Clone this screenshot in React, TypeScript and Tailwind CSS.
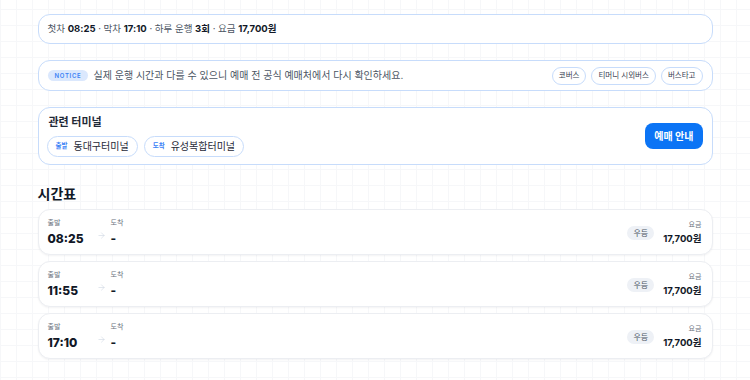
import { ArrowRight } from 'lucide-react';

const font = { fontFamily: 'Inter, "Noto Sans CJK KR", sans-serif' };

const schedules = [
  { time: '08:25', grade: '우등', fare: '17,700원' },
  { time: '11:55', grade: '우등', fare: '17,700원' },
  { time: '17:10', grade: '우등', fare: '17,700원' },
];

const vendors = ['코버스', '티머니 시외버스', '버스타고'];

function ScheduleRow({ time, grade, fare }: { time: string; grade: string; fare: string }) {
  return (
    <div className="flex h-[46px] items-center rounded-xl border border-[#eceef2] bg-white pl-[9px] pr-[10px] shadow-[0_1px_2px_rgba(15,23,42,0.05)]">
      <div className="flex w-[49px] flex-col">
        <span className="text-[7px] leading-[9px] text-[#6b7280]">출발</span>
        <span className="mt-[4px] text-[12px] font-extrabold leading-[15px] text-[#111827]">{time}</span>
      </div>
      <ArrowRight className="mt-[6px] size-[9px] text-[#cbd5e1]" strokeWidth={1.5} />
      <div className="ml-[5px] flex flex-col">
        <span className="text-[7px] leading-[9px] text-[#6b7280]">도착</span>
        <span className="mt-[4px] text-[12px] font-extrabold leading-[15px] text-[#111827]">-</span>
      </div>
      <div className="flex-1" />
      <span className="mr-[9px] mt-[2px] rounded-full bg-[#eef1f6] px-[6px] py-[2px] text-[8px] leading-[10px] text-[#4b5563]">
        {grade}
      </span>
      <div className="flex flex-col items-end">
        <span className="text-[7px] leading-[9px] text-[#6b7280]">요금</span>
        <span className="mt-[4px] text-[9.5px] font-bold leading-[12px] text-[#111827]">{fare}</span>
      </div>
    </div>
  );
}

export default function App() {
  return (
    <div
      className="min-h-[380px] w-full bg-white bg-[linear-gradient(to_right,#f6f7f9_1px,transparent_1px),linear-gradient(to_bottom,#f6f7f9_1px,transparent_1px)] bg-[size:16px_16px] bg-[position:0px_9px]"
      style={font}
    >
      <div className="mx-auto flex w-[675px] flex-col pt-[14px]">
        <div className="flex h-[30px] items-center rounded-xl border border-[#c7dcfb] bg-white px-[9px] text-[9.5px] text-[#4b5563]">
          <span>
            첫차 <b className="text-[#111827]">08:25</b> · 막차 <b className="text-[#111827]">17:10</b> · 하루 운행{' '}
            <b className="text-[#111827]">3회</b> · 요금 <b className="text-[#111827]">17,700원</b>
          </span>
        </div>

        <div className="mt-[16px] flex h-[31px] items-center rounded-xl border border-[#c7dcfb] bg-white pl-[9px] pr-[9px]">
          <span className="rounded-full bg-[#dbe8fd] px-[7px] py-[1px] text-[6px] font-semibold leading-[9px] tracking-[0.12em] text-[#3b82f6]">
            NOTICE
          </span>
          <span className="ml-[5px] text-[10px] text-[#4b5563]">
            실제 운행 시간과 다를 수 있으니 예매 전 공식 예매처에서 다시 확인하세요.
          </span>
          <div className="flex-1" />
          <div className="flex gap-[5px]">
            {vendors.map((v) => (
              <span
                key={v}
                className="rounded-full border border-[#c7dcfb] bg-white px-[6px] py-[2px] text-[7.5px] leading-[12px] text-[#374151]"
              >
                {v}
              </span>
            ))}
          </div>
        </div>

        <div className="mt-[16px] flex h-[58px] items-center rounded-xl border border-[#c7dcfb] bg-white pl-[8px] pr-[9px]">
          <div className="flex flex-col">
            <span className="ml-[2px] text-[11px] font-bold leading-[14px] text-[#1f2937]">관련 터미널</span>
            <div className="mt-[7px] flex gap-[6px]">
              <span className="flex h-[21px] items-center gap-[6px] rounded-full border border-[#c7dcfb] px-[8px]">
                <span className="text-[6.5px] font-semibold text-[#3b82f6]">출발</span>
                <span className="text-[10px] text-[#1f2937]">동대구터미널</span>
              </span>
              <span className="flex h-[21px] items-center gap-[6px] rounded-full border border-[#c7dcfb] px-[8px]">
                <span className="text-[6.5px] font-semibold text-[#3b82f6]">도착</span>
                <span className="text-[10px] text-[#1f2937]">유성복합터미널</span>
              </span>
            </div>
          </div>
          <div className="flex-1" />
          <button
            type="button"
            className="h-[26px] rounded-lg bg-[#0b74f5] px-[9px] text-[10px] font-bold text-white"
          >
            예매 안내
          </button>
        </div>

        <h2 className="mt-[20px] text-[14px] font-bold leading-[18px] text-[#111827]">시간표</h2>

        <div className="mt-[6px] flex flex-col gap-[6px]">
          {schedules.map((s) => (
            <ScheduleRow key={s.time} {...s} />
          ))}
        </div>
      </div>
    </div>
  );
}
